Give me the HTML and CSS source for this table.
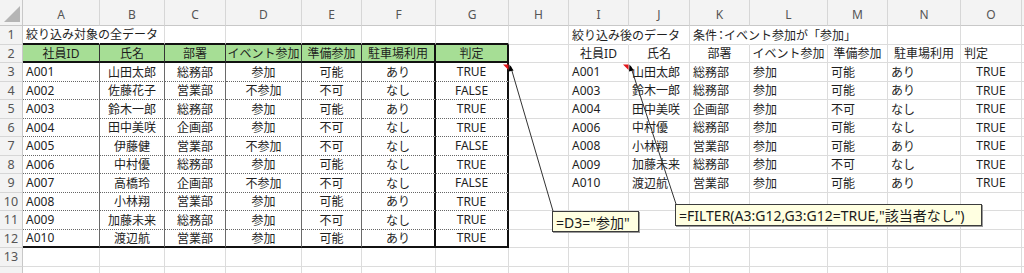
FILE: index.html
```html
<!DOCTYPE html>
<html lang="ja">
<head>
<meta charset="utf-8">
<title>FILTER sheet</title>
<link rel="stylesheet" href="styles.css">
</head>
<body>
<div class="sheet">
  <!-- column headers -->
  <div class="c corner"><svg class="corner-tri" width="18" height="18" viewBox="0 0 18 18"><polygon points="17,1 17,17 1,17" fill="#b5b5b5"/></svg></div>
  <div class="c ch">A</div><div class="c ch">B</div><div class="c ch">C</div><div class="c ch">D</div><div class="c ch">E</div><div class="c ch">F</div><div class="c ch">G</div><div class="c ch">H</div><div class="c ch">I</div><div class="c ch">J</div><div class="c ch">K</div><div class="c ch">L</div><div class="c ch">M</div><div class="c ch">N</div><div class="c ch">O</div><div class="c ch"></div>

  <!-- row 1 -->
  <div class="c rh">1</div>
  <div class="c tt nr">絞り込み対象の全データ</div><div class="c tt"></div><div class="c tt"></div><div class="c tt"></div><div class="c tt"></div><div class="c tt"></div><div class="c tt"></div>
  <div class="c"></div>
  <div class="c nr">絞り込み後のデータ</div><div class="c"></div>
  <div class="c nr">条件<span class="colon">：</span>イベント参加が「参加」</div><div class="c nr"></div><div class="c"></div><div class="c"></div><div class="c"></div>
  <div class="c"></div>

  <!-- row 2 -->
  <div class="c rh">2</div>
  <div class="c hd ctr">社員ID</div><div class="c hd ctr">氏名</div><div class="c hd ctr">部署</div><div class="c hd ctr">イベント参加</div><div class="c hd ctr">準備参加</div><div class="c hd ctr tk">駐車場利用</div><div class="c hd ctr tk">判定</div>
  <div class="c"></div>
  <div class="c ctr">社員ID</div><div class="c ctr">氏名</div><div class="c ctr">部署</div><div class="c ctr">イベント参加</div><div class="c ctr">準備参加</div><div class="c ctr">駐車場利用</div><div class="c">判定</div>
  <div class="c"></div>

  <!-- row 3 -->
  <div class="c rh">3</div>
  <div class="c td">A001</div><div class="c td ctr">山田太郎</div><div class="c td ctr">総務部</div><div class="c td ctr">参加</div><div class="c td ctr">可能</div><div class="c td ctr tk">あり</div><div class="c td ctr tk">TRUE</div>
  <div class="c"></div>
  <div class="c">A001</div><div class="c">山田太郎</div><div class="c">総務部</div><div class="c">参加</div><div class="c">可能</div><div class="c">あり</div><div class="c ctr">TRUE</div>
  <div class="c"></div>

  <!-- row 4 -->
  <div class="c rh">4</div>
  <div class="c td">A002</div><div class="c td ctr">佐藤花子</div><div class="c td ctr">営業部</div><div class="c td ctr">不参加</div><div class="c td ctr">不可</div><div class="c td ctr tk">なし</div><div class="c td ctr tk">FALSE</div>
  <div class="c"></div>
  <div class="c">A003</div><div class="c">鈴木一郎</div><div class="c">総務部</div><div class="c">参加</div><div class="c">可能</div><div class="c">あり</div><div class="c ctr">TRUE</div>
  <div class="c"></div>

  <!-- row 5 -->
  <div class="c rh">5</div>
  <div class="c td">A003</div><div class="c td ctr">鈴木一郎</div><div class="c td ctr">総務部</div><div class="c td ctr">参加</div><div class="c td ctr">可能</div><div class="c td ctr tk">あり</div><div class="c td ctr tk">TRUE</div>
  <div class="c"></div>
  <div class="c">A004</div><div class="c">田中美咲</div><div class="c">企画部</div><div class="c">参加</div><div class="c">不可</div><div class="c">なし</div><div class="c ctr">TRUE</div>
  <div class="c"></div>

  <!-- row 6 -->
  <div class="c rh">6</div>
  <div class="c td">A004</div><div class="c td ctr">田中美咲</div><div class="c td ctr">企画部</div><div class="c td ctr">参加</div><div class="c td ctr">不可</div><div class="c td ctr tk">なし</div><div class="c td ctr tk">TRUE</div>
  <div class="c"></div>
  <div class="c">A006</div><div class="c">中村優</div><div class="c">総務部</div><div class="c">参加</div><div class="c">可能</div><div class="c">なし</div><div class="c ctr">TRUE</div>
  <div class="c"></div>

  <!-- row 7 -->
  <div class="c rh">7</div>
  <div class="c td">A005</div><div class="c td ctr">伊藤健</div><div class="c td ctr">営業部</div><div class="c td ctr">不参加</div><div class="c td ctr">不可</div><div class="c td ctr tk">なし</div><div class="c td ctr tk">FALSE</div>
  <div class="c"></div>
  <div class="c">A008</div><div class="c">小林翔</div><div class="c">営業部</div><div class="c">参加</div><div class="c">可能</div><div class="c">あり</div><div class="c ctr">TRUE</div>
  <div class="c"></div>

  <!-- row 8 -->
  <div class="c rh">8</div>
  <div class="c td">A006</div><div class="c td ctr">中村優</div><div class="c td ctr">総務部</div><div class="c td ctr">参加</div><div class="c td ctr">可能</div><div class="c td ctr tk">なし</div><div class="c td ctr tk">TRUE</div>
  <div class="c"></div>
  <div class="c">A009</div><div class="c">加藤未来</div><div class="c">総務部</div><div class="c">参加</div><div class="c">不可</div><div class="c">なし</div><div class="c ctr">TRUE</div>
  <div class="c"></div>

  <!-- row 9 -->
  <div class="c rh">9</div>
  <div class="c td">A007</div><div class="c td ctr">高橋玲</div><div class="c td ctr">企画部</div><div class="c td ctr">不参加</div><div class="c td ctr">不可</div><div class="c td ctr tk">なし</div><div class="c td ctr tk">FALSE</div>
  <div class="c"></div>
  <div class="c">A010</div><div class="c">渡辺航</div><div class="c">営業部</div><div class="c">参加</div><div class="c">可能</div><div class="c">あり</div><div class="c ctr">TRUE</div>
  <div class="c"></div>

  <!-- row 10 -->
  <div class="c rh">10</div>
  <div class="c td">A008</div><div class="c td ctr">小林翔</div><div class="c td ctr">営業部</div><div class="c td ctr">参加</div><div class="c td ctr">可能</div><div class="c td ctr tk">あり</div><div class="c td ctr tk">TRUE</div>
  <div class="c"></div>
  <div class="c"></div><div class="c"></div><div class="c"></div><div class="c"></div><div class="c"></div><div class="c"></div><div class="c"></div>
  <div class="c"></div>

  <!-- row 11 -->
  <div class="c rh">11</div>
  <div class="c td">A009</div><div class="c td ctr">加藤未来</div><div class="c td ctr">総務部</div><div class="c td ctr">参加</div><div class="c td ctr">不可</div><div class="c td ctr tk">なし</div><div class="c td ctr tk">TRUE</div>
  <div class="c"></div>
  <div class="c"></div><div class="c"></div><div class="c"></div><div class="c"></div><div class="c"></div><div class="c"></div><div class="c"></div>
  <div class="c"></div>

  <!-- row 12 -->
  <div class="c rh">12</div>
  <div class="c td lr">A010</div><div class="c td lr ctr">渡辺航</div><div class="c td lr ctr">営業部</div><div class="c td lr ctr">参加</div><div class="c td lr ctr">可能</div><div class="c td lr ctr tk">あり</div><div class="c td lr ctr tk">TRUE</div>
  <div class="c"></div>
  <div class="c"></div><div class="c"></div><div class="c"></div><div class="c"></div><div class="c"></div><div class="c"></div><div class="c"></div>
  <div class="c"></div>

  <!-- row 13 -->
  <div class="c rh">13</div>
  <div class="c"></div><div class="c"></div><div class="c"></div><div class="c"></div><div class="c"></div><div class="c"></div><div class="c"></div><div class="c"></div>
  <div class="c"></div><div class="c"></div><div class="c"></div><div class="c"></div><div class="c"></div><div class="c"></div><div class="c"></div>
  <div class="c"></div>

  <!-- row 14 (partly visible) -->
  <div class="c rh"></div>
  <div class="c"></div><div class="c"></div><div class="c"></div><div class="c"></div><div class="c"></div><div class="c"></div><div class="c"></div><div class="c"></div>
  <div class="c"></div><div class="c"></div><div class="c"></div><div class="c"></div><div class="c"></div><div class="c"></div><div class="c"></div>
  <div class="c"></div>

  <!-- comment arrows -->
  <svg class="arrows" width="1024" height="273" viewBox="0 0 1024 273">
    <polygon points="503,64.5 508.5,64.5 508.5,70" fill="#e3161b"/>
    <polygon points="623,64.5 628.5,64.5 628.5,70" fill="#e3161b"/>
    <line x1="510.5" y1="66" x2="553" y2="211" stroke="#333" stroke-width="1"/>
    <polygon points="509.5,64.5 513.6,70.4 508.8,71.6" fill="#000"/>
    <line x1="630.5" y1="66" x2="676" y2="204" stroke="#333" stroke-width="1"/>
    <polygon points="629.5,64.5 633.8,70.2 629,71.6" fill="#000"/>
  </svg>
  <div class="note note-d3">=D3="参加"</div>
  <div class="note note-filter">=FILTER(A3:G12,G3:G12=TRUE,"該当者なし")</div>
</div>
</body>
</html>
```

FILE: styles.css
```css
html, body {
  margin: 0;
  padding: 0;
  background: #ffffff;
}

.sheet {
  position: relative;
  display: grid;
  grid-template-columns: 23px 77px 65px 61px 76px 60px 74px 73px 60px 60px 61px 60px 78px 60px 73px 61px 1fr;
  grid-template-rows: 26px repeat(14, 18.5px);
  width: 1024px;
  height: 273px;
  overflow: hidden;
  font-family: "Noto Sans", "Noto Sans CJK JP", sans-serif;
  font-size: 12px;
  color: #1e1e1e;
}

.c {
  box-sizing: border-box;
  display: flex;
  align-items: center;
  padding: 0 3px;
  min-width: 0;
  white-space: nowrap;
  overflow: visible;
  border-right: 1px solid #dcdcdc;
  border-bottom: 1px solid #dcdcdc;
}

.ctr {
  justify-content: center;
}

.nr {
  border-right-color: transparent;
}

.colon {
  margin-left: -2px;
  letter-spacing: -3px;
}

/* headers */
.corner {
  background: #f3f3f3;
  border-right: 1px solid #c8c8c8;
  border-bottom: 1px solid #c8c8c8;
  padding: 0;
  align-items: flex-end;
  justify-content: flex-end;
}

.corner-tri {
  display: block;
  margin: 0 1px 2px 0;
}

.ch {
  background: #f3f3f3;
  color: #555555;
  justify-content: center;
  padding-top: 3px;
  font-size: 12px;
  border-right: 1px solid #d6d6d6;
  border-bottom: 1px solid #c8c8c8;
}

.rh {
  background: #f3f3f3;
  color: #555555;
  justify-content: center;
  padding: 0;
  font-size: 12.5px;
  border-right: 1px solid #c8c8c8;
  border-bottom: 1px solid #d6d6d6;
}

/* table 1 */
.tt {
  border-bottom: 2px solid #111111;
}

.hd {
  background: #a6de95;
  border-right: 1px solid #333333;
  border-bottom: 2px solid #111111;
}

.td {
  border-right: 1px solid #6a6a6a;
  border-bottom: 1px dotted #666666;
}

.lr {
  border-bottom: 2px solid #111111;
}

.tk {
  border-right: 2px solid #111111;
}

/* overlays */
.arrows {
  position: absolute;
  left: 0;
  top: 0;
  pointer-events: none;
}

.note {
  position: absolute;
  box-sizing: border-box;
  background: #ffffe1;
  border: 1px solid #3c3c3c;
  box-shadow: 1px 1px 0 #9a9a9a;
  font-size: 14px;
  color: #1a1a1a;
  white-space: nowrap;
  display: flex;
  align-items: center;
  padding: 0 3px;
}

.note-d3 {
  left: 552px;
  top: 211px;
  width: 87px;
  height: 21px;
}

.note-filter {
  left: 675px;
  top: 204px;
  width: 307px;
  height: 22px;
}
```
